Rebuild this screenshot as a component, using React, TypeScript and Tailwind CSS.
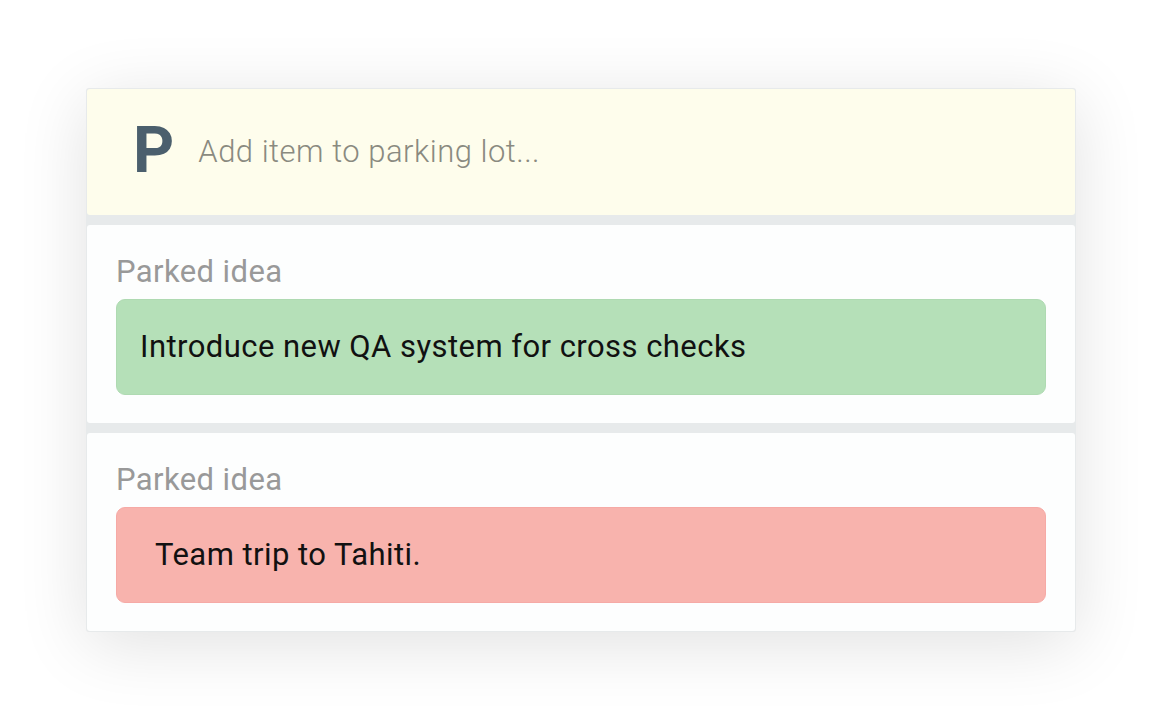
import React from 'react';

type Idea = { text: string; tone: 'green' | 'red' };

const ideas: Idea[] = [
  { text: 'Introduce new QA system for cross checks', tone: 'green' },
  { text: 'Team trip to Tahiti.', tone: 'red' },
];

const ParkedCard = ({ idea }: { idea: Idea }) => (
  <div className="h-[198px] bg-[#fdfefe] rounded-[3px] px-[29px] pt-[29px]">
    <p className="text-[31px] leading-[36px] tracking-[0.4px] text-[#999999] mb-[9px]">Parked idea</p>
    <div
      className={
        idea.tone === 'green'
          ? 'h-[96px] rounded-[9px] bg-[#b5e0b8] border border-[#afdab2] flex items-center pl-[23px] text-[31px] tracking-[0.45px] text-[#111]'
          : 'h-[96px] rounded-[9px] bg-[#f8b3ad] border border-[#f6aaa6] flex items-center pl-[38px] text-[31px] tracking-[0.45px] text-[#111]'
      }
    >
      {idea.text}
    </div>
  </div>
);

export default function App() {
  return (
    <div className="w-[1162px] h-[720px] bg-white flex items-center justify-center font-['Roboto',sans-serif]">
      <div className="w-[990px] bg-[#e7eaeb] p-px flex flex-col gap-[10px] rounded-[3px] shadow-[0_12px_70px_rgba(0,0,0,0.12)]">
        <div className="h-[126px] bg-[#fefdec] rounded-[3px] flex items-center pl-[46px] gap-[24px]">
          <span className="text-[64px] leading-none font-bold text-[#4b5f6d] -mt-[2px]">P</span>
          <span className="text-[31px] font-light tracking-[0.5px] text-[#8a8a80]">Add item to parking lot...</span>
        </div>
        {ideas.map((idea) => (
          <ParkedCard key={idea.text} idea={idea} />
        ))}
      </div>
    </div>
  );
}
